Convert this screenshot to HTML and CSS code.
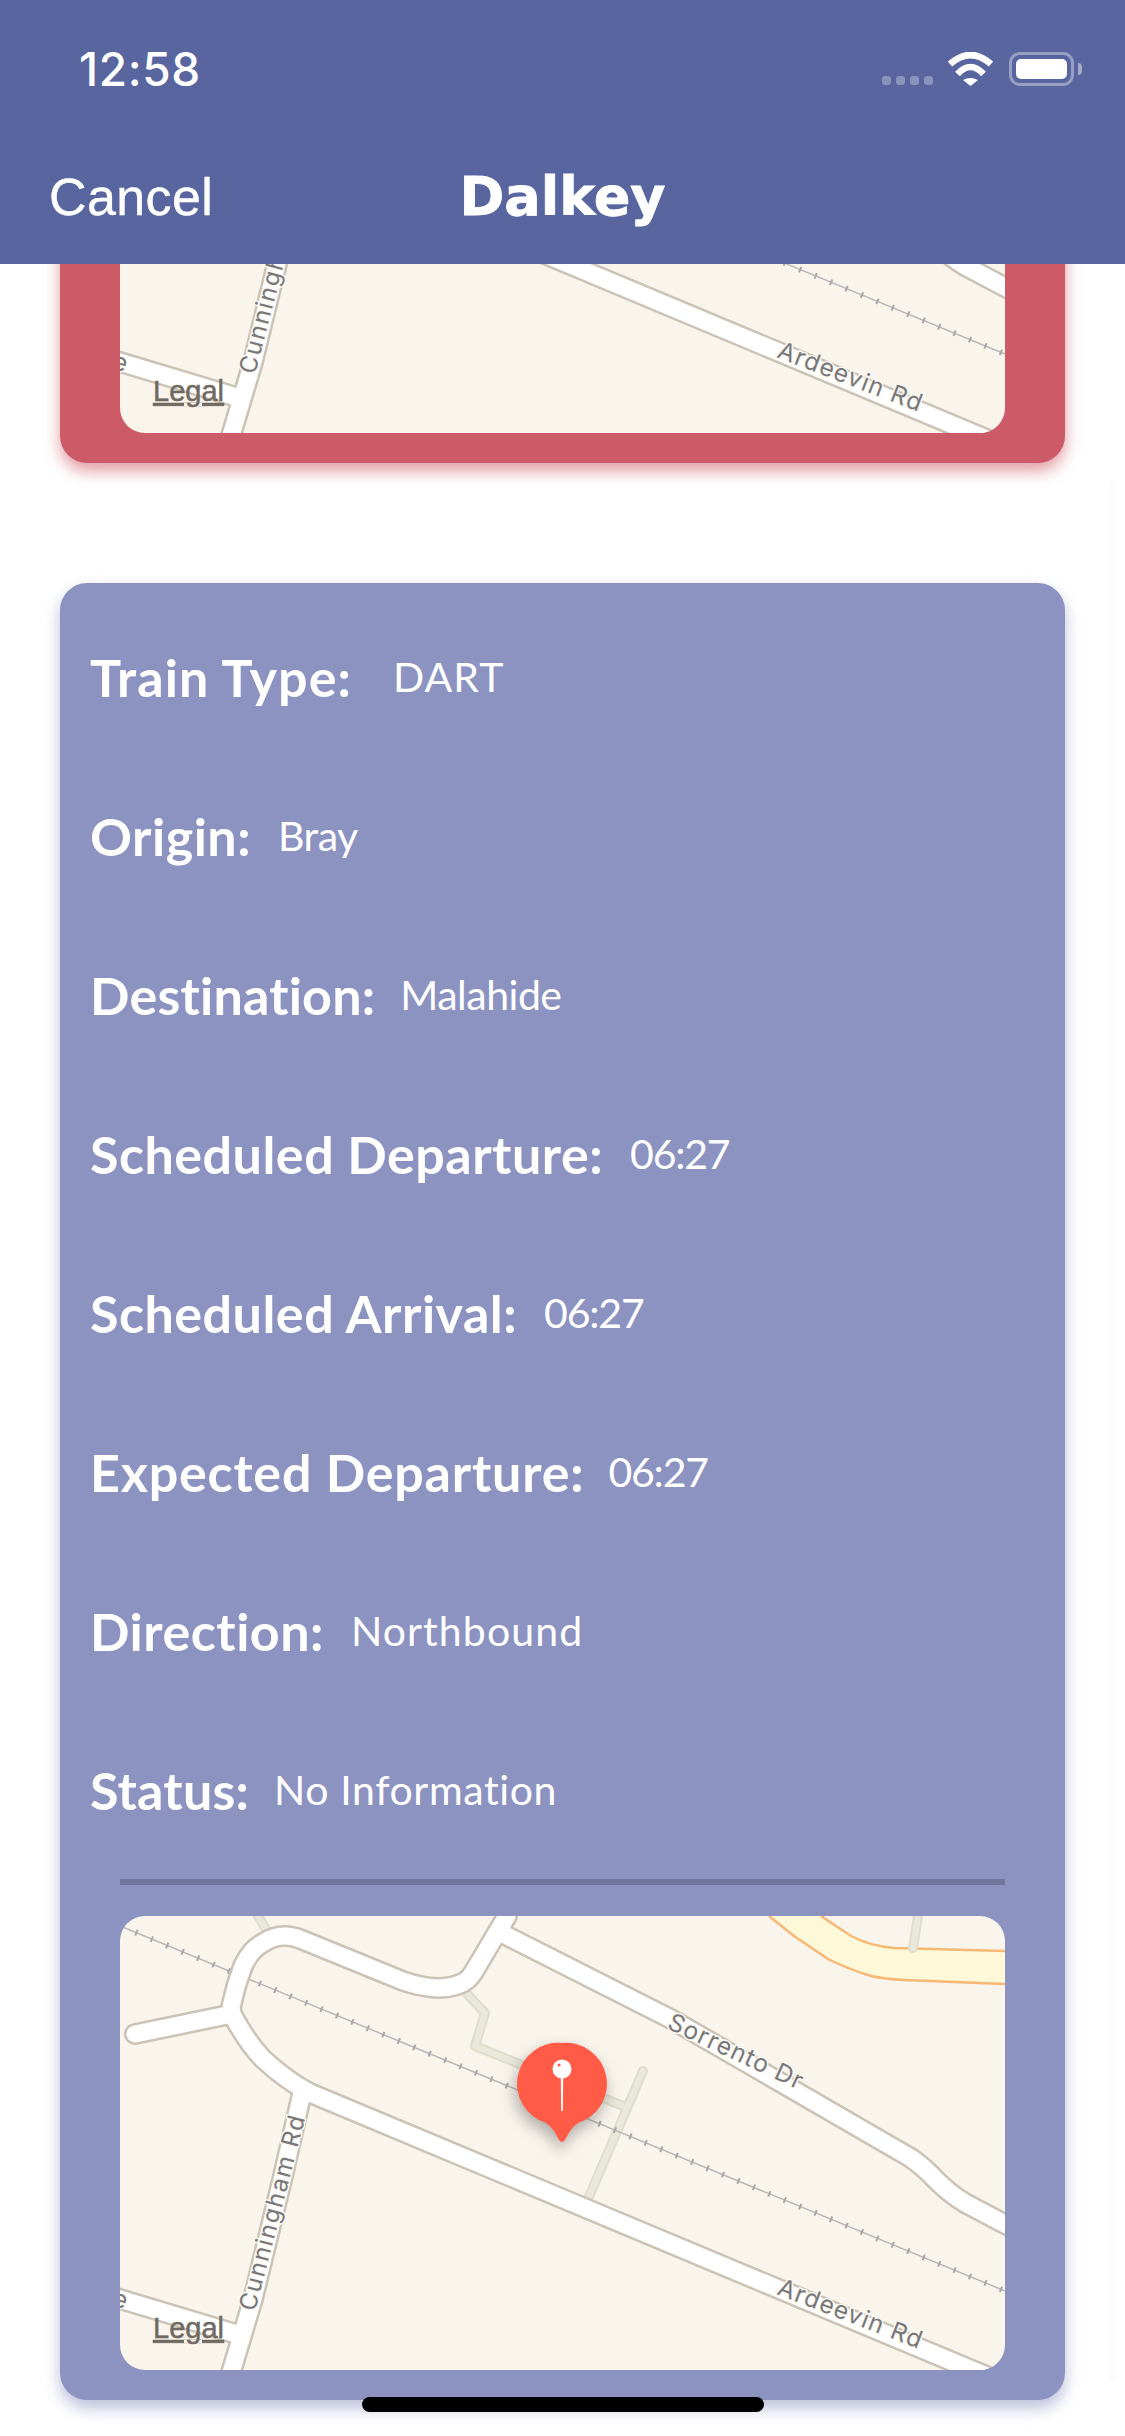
FILE: index.html
```html
<!DOCTYPE html>
<html lang="en">
<head>
<meta charset="utf-8">
<title>Dalkey</title>
<link rel="stylesheet" href="styles.css">
</head>
<body>
<svg class="defs" width="0" height="0" aria-hidden="true">
  <symbol id="map" viewBox="0 0 885 454">
    <rect class="m-land" width="885" height="454"/>
    <path class="m-moto" d="M701 0L731 20Q750 30 774 32L885 35V68L784 64Q765 63 751 60Q728 53 708 43L674 20L649 0Z"/>
    <path class="m-moto-edge" d="M701 0L731 20Q750 30 774 32L885 35M649 0L674 20L708 43Q728 53 751 60Q765 63 784 64L885 68"/>
    <path class="m-foot-case" d="M138 0L147 15M347 78L365 97L355 130L503 190M523 155L468 283M798 0L793 32"/>
    <path class="m-foot" d="M138 0L147 15M347 78L365 97L355 130L503 190M523 155L468 283M798 0L793 32"/>
    <path class="m-rail" d="M0 10L885 375"/>
    <path class="m-ties" d="M0 10L885 375"/>
    <g class="m-case">
      <path d="M900 474L190 177Q167 165 143 143Q127 126 113 100Q110 93 112 87Q116 68 123 50Q131 33 143 27Q153 20 165 20Q172 20 180 23L283 65Q300 71 317 72Q330 72 340 68Q348 65 353 57L387 0"/>
      <path d="M112 98L15 118"/>
      <path d="M383 18L551 103L791 242Q805 252 815 263Q830 278 845 287L900 316"/>
      <path d="M182 177L163 260L133 383L110 460"/>
      <path d="M-10 380L113 417"/>
    </g>
    <g class="m-road">
      <path d="M900 474L190 177Q167 165 143 143Q127 126 113 100Q110 93 112 87Q116 68 123 50Q131 33 143 27Q153 20 165 20Q172 20 180 23L283 65Q300 71 317 72Q330 72 340 68Q348 65 353 57L387 0"/>
      <path d="M112 98L15 118"/>
      <path d="M383 18L551 103L791 242Q805 252 815 263Q830 278 845 287L900 316"/>
      <path d="M182 177L163 260L133 383L110 460"/>
      <path d="M-10 380L113 417"/>
    </g>
    <text class="m-label m-label-long" transform="translate(135 396) rotate(-75.500)">Cunningham Rd</text>
    <text class="m-label" transform="translate(546 112) rotate(25)">Sorrento Dr</text>
    <text class="m-label" transform="translate(656 378) rotate(21)">Ardeevin Rd</text>
    <text class="m-label" transform="translate(-9 389) rotate(18)">e</text>
    <text class="m-legal" x="33" y="422">Legal</text>
  </symbol>
</svg>

<header class="top">
  <div class="status">
    <span class="time">12:58</span>
    <div class="status-icons">
      <div class="signal"><i></i><i></i><i></i><i></i></div>
      <svg class="wifi" width="45" height="34" viewBox="0 0 45 34" aria-hidden="true">
        <path class="wifi-arc" d="M2 12Q22.500 -6 43 12"/>
        <path class="wifi-arc" d="M9.500 22Q22.500 8 35.500 22"/>
        <path class="wifi-dot" d="M15 28Q22.500 24 30 28L22.500 34Z"/>
      </svg>
      <div class="battery"><div class="battery-body"><div class="battery-fill"></div></div><div class="battery-nub"></div></div>
    </div>
  </div>
  <nav class="nav">
    <span class="nav-cancel">Cancel</span>
    <span class="nav-title">Dalkey</span>
    <span class="nav-spacer"></span>
  </nav>
</header>

<main class="content">
  <section class="card card-red">
    <div class="map"><svg class="map-svg" viewBox="0 0 885 454"><use href="#map"/></svg></div>
  </section>

  <section class="card card-blue">
    <div class="row row-wide"><span class="label">Train Type:</span><span class="value value-wide">DART</span></div>
    <div class="row"><span class="label">Origin:</span><span class="value value-tight">Bray</span></div>
    <div class="row row-snug"><span class="label">Destination:</span><span class="value value-tight">Malahide</span></div>
    <div class="row"><span class="label">Scheduled Departure:</span><span class="value value-time">06:27</span></div>
    <div class="row"><span class="label">Scheduled Arrival:</span><span class="value value-time">06:27</span></div>
    <div class="row row-loose"><span class="label">Expected Departure:</span><span class="value value-time">06:27</span></div>
    <div class="row"><span class="label">Direction:</span><span class="value value-wide">Northbound</span></div>
    <div class="row row-snug"><span class="label">Status:</span><span class="value">No Information</span></div>
    <div class="sep"></div>
    <div class="map">
      <svg class="map-svg" viewBox="0 0 885 454"><use href="#map"/></svg>
      <svg class="pin" width="100" height="120" viewBox="392 116 100 120" aria-hidden="true">
        <path class="pin-body" d="M442 127A41 41 0 0 1 458 207C452 211 448 218 445 224Q442 228 439 224C436 218 432 211 426 207A41 41 0 0 1 442 127Z"/>
        <circle class="pin-head" cx="442" cy="153" r="9.500"/>
        <circle class="pin-body" cx="439" cy="149" r="1.600"/>
        <path class="pin-needle" d="M440.800 162H443.200L442.800 195H441.200Z"/>
      </svg>
    </div>
  </section>
</main>

<div class="scroll-track"></div>
<div class="home-bar"></div>
</body>
</html>
```

FILE: styles.css
```css
* { box-sizing: border-box; }
html, body { margin: 0; padding: 0; }
body {
  position: relative;
  width: 1125px;
  height: 2436px;
  overflow: hidden;
  background: #fff;
  font-family: "Lato", "Liberation Sans", sans-serif;
}
.defs { position: absolute; }

/* header */
.top {
  position: relative;
  z-index: 2;
  height: 264px;
  background: #58659f;
  color: #fff;
  display: flex;
  flex-direction: column;
}
.status {
  display: flex;
  align-items: flex-start;
  justify-content: space-between;
  height: 161px;
  padding: 43px 43px 0 79px;
}
.time {
  font-family: "Inter", "Liberation Sans", sans-serif;
  font-size: 46px;
  font-weight: 500;
  letter-spacing: .6px;
  line-height: 52px;
}
.status-icons {
  display: flex;
  align-items: flex-start;
  padding-top: 9px;
}
.signal {
  display: flex;
  gap: 5px;
  margin-top: 24px;
  margin-right: 15px;
}
.signal i {
  width: 9px;
  height: 9px;
  border-radius: 3px;
  background: rgba(255, 255, 255, .3);
}
.wifi { display: block; margin-right: 16px; }
.wifi-arc { fill: none; stroke: #fff; stroke-width: 6.500; }
.wifi-dot { fill: #fff; }
.battery { display: flex; align-items: center; gap: 4px; }
.battery-body {
  width: 65px;
  height: 34px;
  padding: 4px;
  border: 3px solid rgba(255, 255, 255, .38);
  border-radius: 11px;
}
.battery-fill { width: 100%; height: 100%; border-radius: 5px; background: #fff; }
.battery-nub {
  width: 4px;
  height: 12px;
  border-radius: 0 4px 4px 0;
  background: rgba(255, 255, 255, .45);
}
.nav {
  display: flex;
  align-items: center;
  justify-content: space-between;
  padding: 0 49px;
  height: 72px;
}
.nav-cancel {
  width: 300px;
  font-family: "Liberation Sans", sans-serif;
  font-size: 52px;
  letter-spacing: .4px;
  line-height: 60px;
  -webkit-text-stroke: .4px #fff;
}
.nav-title {
  font-family: "DejaVu Sans", sans-serif;
  font-size: 54px;
  font-weight: 700;
  line-height: 60px;
  -webkit-text-stroke: .8px #fff;
}
.nav-spacer { width: 300px; }

/* content */
.content {
  display: flex;
  flex-direction: column;
  gap: 120px;
  margin-top: -315px;
  padding: 0 60px;
}
.card {
  border-radius: 27px;
  padding: 30px 60px;
}
.card-red {
  background: #cd5a67;
  box-shadow: 0 8px 16px rgba(205, 90, 103, .6);
}
.card-blue {
  padding-top: 14px;
  background: #8d93c1;
  box-shadow: 0 8px 16px rgba(141, 147, 193, .6);
}
.row {
  display: flex;
  align-items: center;
  gap: 27px;
  height: 159px;
  margin: 0 -30px;
  color: #fff;
}
.label { font-size: 52px; font-weight: 700; line-height: 60px; letter-spacing: .5px; }
.value { font-size: 41px; font-weight: 400; line-height: 60px; letter-spacing: .6px; }
.row-wide { gap: 41px; }
.row-wide .label { letter-spacing: 1.100px; }
.row-snug { gap: 25px; }
.row-snug .label { letter-spacing: .2px; }
.row-loose { gap: 24px; }
.row-loose .label { letter-spacing: .8px; }
.value-wide { letter-spacing: 1.100px; }
.value-tight { letter-spacing: -.5px; }
.value-time { letter-spacing: -1.200px; }
.sep {
  height: 6px;
  margin: 10px 0 31px;
  background: #72769d;
}
.map {
  position: relative;
  height: 454px;
  border-radius: 25px;
  overflow: hidden;
}
.map-svg { display: block; width: 885px; height: 454px; }
.pin {
  position: absolute;
  left: 392px;
  top: 116px;
  overflow: visible;
  filter: drop-shadow(-2px 7px 8px rgba(0, 0, 0, .3));
}
.pin-body { fill: #ff5b47; }
.pin-head { fill: #fff; }
.pin-needle { fill: #fff; }

/* map symbol */
.m-land { fill: #f9f4ec; }
.m-moto { fill: #fdf9d8; }
.m-moto-edge { fill: none; stroke: #f6b874; stroke-width: 2.500; }
.m-foot-case { fill: none; stroke: #dedecd; stroke-width: 10; stroke-linecap: round; stroke-linejoin: round; }
.m-foot { fill: none; stroke: #e9e8db; stroke-width: 6; stroke-linecap: round; stroke-linejoin: round; }
.m-rail { fill: none; stroke: #b8b8b9; stroke-width: 1.500; }
.m-ties { fill: none; stroke: #a8a8aa; stroke-width: 6; stroke-dasharray: 2 14.700; }
.m-case path { fill: none; stroke: #cbc3b6; stroke-width: 22; stroke-linecap: round; stroke-linejoin: round; }
.m-road path { fill: none; stroke: #fff; stroke-width: 17; stroke-linecap: round; stroke-linejoin: round; }
.m-label {
  font-family: "Inter", "Liberation Sans", sans-serif;
  font-size: 24.500px;
  letter-spacing: 1.200px;
  fill: #77777a;
  stroke: #fbf8f2;
  stroke-width: 3px;
  paint-order: stroke;
}
.m-label-long { font-size: 24px; letter-spacing: 1.700px; }
.m-legal {
  font-family: "Liberation Sans", sans-serif;
  font-size: 29px;
  fill: #6f6a62;
  stroke: #6f6a62;
  stroke-width: .5px;
  text-decoration: underline;
}

/* overlays */
.scroll-track {
  position: absolute;
  left: 1109px;
  top: 480px;
  width: 7px;
  height: 1900px;
  border-radius: 4px;
  background: #fbfbfb;
}
.home-bar {
  position: absolute;
  left: 362px;
  top: 2397px;
  width: 402px;
  height: 15px;
  border-radius: 8px;
  background: #000;
  z-index: 3;
}
```
